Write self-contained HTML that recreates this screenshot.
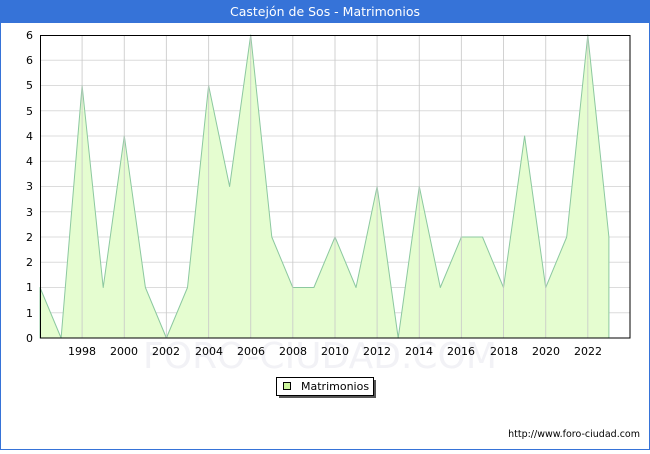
<!DOCTYPE html>
<html><head><meta charset="utf-8"><style>
body{margin:0;width:650px;height:450px;overflow:hidden;background:#fff;font-family:"DejaVu Sans","Liberation Sans",sans-serif}
</style></head><body>
<svg width="650" height="450" xmlns="http://www.w3.org/2000/svg" font-family="DejaVu Sans, Liberation Sans, sans-serif">
<rect x="0.5" y="0.5" width="649" height="449" fill="#fff" stroke="#3673d8"/>
<rect x="0" y="0" width="650" height="23" fill="#3673d8"/>
<text x="325" y="16" fill="#fff" font-size="12.5" text-anchor="middle">Castejón de Sos - Matrimonios</text>
<g stroke="#dcdcdc" stroke-width="1">
<line x1="40" x2="630" y1="60.2" y2="60.2"/><line x1="40" x2="630" y1="85.5" y2="85.5"/><line x1="40" x2="630" y1="110.7" y2="110.7"/><line x1="40" x2="630" y1="136" y2="136"/><line x1="40" x2="630" y1="161.2" y2="161.2"/><line x1="40" x2="630" y1="186.5" y2="186.5"/><line x1="40" x2="630" y1="211.7" y2="211.7"/><line x1="40" x2="630" y1="237" y2="237"/><line x1="40" x2="630" y1="262.2" y2="262.2"/><line x1="40" x2="630" y1="287.5" y2="287.5"/><line x1="40" x2="630" y1="312.7" y2="312.7"/>
</g>
<polygon fill="#e5fdd0" stroke="#8cc8a0" stroke-width="1" stroke-linejoin="round" points="40,338 40,287.5 61.1,338 82.1,85.5 103.2,287.5 124.3,136 145.4,287.5 166.4,338 187.5,287.5 208.6,85.5 229.6,186.5 250.7,35 271.8,237 292.8,287.5 313.9,287.5 335,237 356,287.5 377.1,186.5 398.2,338 419.3,186.5 440.3,287.5 461.4,237 482.5,237 503.5,287.5 524.6,136 545.7,287.5 566.7,237 587.8,35 608.9,237 608.9,338"/>
<g stroke="#c8c8c8" stroke-width="1" opacity="0.8">
<line x1="82.1" x2="82.1" y1="35" y2="338"/><line x1="124.3" x2="124.3" y1="35" y2="338"/><line x1="166.4" x2="166.4" y1="35" y2="338"/><line x1="208.6" x2="208.6" y1="35" y2="338"/><line x1="250.7" x2="250.7" y1="35" y2="338"/><line x1="292.8" x2="292.8" y1="35" y2="338"/><line x1="335" x2="335" y1="35" y2="338"/><line x1="377.1" x2="377.1" y1="35" y2="338"/><line x1="419.3" x2="419.3" y1="35" y2="338"/><line x1="461.4" x2="461.4" y1="35" y2="338"/><line x1="503.5" x2="503.5" y1="35" y2="338"/><line x1="545.7" x2="545.7" y1="35" y2="338"/><line x1="587.8" x2="587.8" y1="35" y2="338"/>
</g>
<rect x="40.5" y="35.5" width="589.5" height="302.5" fill="none" stroke="#000"/>
<text x="320" y="368" fill="#f2f2f6" font-size="36" text-anchor="middle">FORO-CIUDAD.COM</text>
<g font-size="11" fill="#000" text-anchor="end">
<text x="33" y="39">6</text><text x="33" y="64">6</text><text x="33" y="89">5</text><text x="33" y="115">5</text><text x="33" y="140">4</text><text x="33" y="165">4</text><text x="33" y="190">3</text><text x="33" y="216">3</text><text x="33" y="241">2</text><text x="33" y="266">2</text><text x="33" y="291">1</text><text x="33" y="317">1</text><text x="33" y="342">0</text>
</g>
<g font-size="11" fill="#000" text-anchor="middle">
<text x="82" y="355">1998</text><text x="124" y="355">2000</text><text x="166" y="355">2002</text><text x="209" y="355">2004</text><text x="251" y="355">2006</text><text x="293" y="355">2008</text><text x="335" y="355">2010</text><text x="377" y="355">2012</text><text x="419" y="355">2014</text><text x="461" y="355">2016</text><text x="504" y="355">2018</text><text x="546" y="355">2020</text><text x="588" y="355">2022</text>
</g>
<rect x="279" y="380" width="97" height="18" fill="#555"/>
<rect x="276.5" y="377.5" width="97" height="18" fill="#fff" stroke="#000"/>
<rect x="283.5" y="382.5" width="7" height="7" fill="#ccf59c" stroke="#000"/>
<text x="301" y="390" font-size="11" fill="#000">Matrimonios</text>
<text x="640" y="437" font-size="9.5" fill="#000" text-anchor="end">http://www.foro-ciudad.com</text>
</svg>
</body></html>
